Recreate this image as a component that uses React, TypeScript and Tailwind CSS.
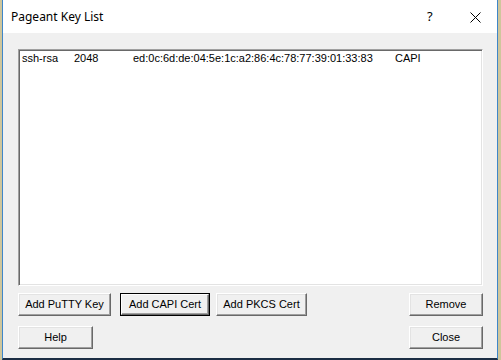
import React from "react";

const btnBase =
  "h-[23px] bg-[#f0f0f0] text-[11px] text-black leading-none flex items-center justify-center border-t border-l border-t-white border-l-white border-b border-r border-b-[#696969] border-r-[#696969] shadow-[inset_-1px_-1px_0_#a0a0a0,inset_1px_1px_0_#e3e3e3]";

function Btn({ label, w, def }: { label: string; w: string; def?: boolean }) {
  if (def) {
    return (
      <div className={`${w} h-[23px] border border-black flex`}>
        <div className="flex-1 bg-[#f0f0f0] text-[11px] text-black leading-none flex items-center justify-center border-t border-l border-t-white border-l-white border-b border-r border-b-[#696969] border-r-[#696969] shadow-[inset_-1px_-1px_0_#a0a0a0]">
          {label}
        </div>
      </div>
    );
  }
  return <div className={`${w} ${btnBase}`}>{label}</div>;
}

export default function App() {
  return (
    <div
      className="w-[501px] h-[360px] bg-[#cfc69c] flex overflow-hidden"
      style={{ fontFamily: '"Liberation Sans", Arial, sans-serif' }}
    >
      <div className="ml-[2px] w-[496px] h-[360px] flex flex-col border-l border-r border-[#3f86c9] border-b-2 border-b-[#1b2d44] bg-[#f0f0f0]">
        {/* title bar */}
        <div className="h-[33px] bg-white flex items-center relative shrink-0">
          <span
            className="ml-[8px] text-[12px] text-black"
            style={{ fontFamily: '"Noto Sans", "Open Sans", sans-serif' }}
          >
            Pageant Key List
          </span>
          <span
            className="absolute left-[424px] top-[7px] text-[13px] text-black"
            style={{ fontFamily: '"Noto Sans", "Open Sans", sans-serif' }}
          >
            ?
          </span>
          <svg
            className="absolute left-[467px] top-[12px]"
            width="11"
            height="11"
            viewBox="0 0 11 11"
          >
            <path d="M0.5 0.5 L10.5 10.5 M10.5 0.5 L0.5 10.5" stroke="#000" strokeWidth="1" />
          </svg>
        </div>
        {/* body */}
        <div className="flex-1 flex flex-col pl-[15px] pr-[14px] pt-[16px]">
          <div className="h-[237px] bg-white border-t border-l border-t-[#a0a0a0] border-l-[#a0a0a0] border-b border-r border-b-white border-r-white shadow-[inset_1px_1px_0_#696969,inset_-1px_-1px_0_#e3e3e3]">
            <div className="flex pl-[3px] pt-[2px] text-[11px] leading-[13px] text-black">
              <span className="w-[52px]">ssh-rsa</span>
              <span className="w-[59px]">2048</span>
              <span className="w-[262px]">ed:0c:6d:de:04:5e:1c:a2:86:4c:78:77:39:01:33:83</span>
              <span>CAPI</span>
            </div>
          </div>
          <div className="flex mt-[7px]">
            <Btn label="Add PuTTY Key" w="w-[93px]" />
            <div className="ml-[9px]">
              <Btn label="Add CAPI Cert" w="w-[90px]" def />
            </div>
            <div className="ml-[6px]">
              <Btn label="Add PKCS Cert" w="w-[91px]" />
            </div>
            <div className="ml-auto">
              <Btn label="Remove" w="w-[74px]" />
            </div>
          </div>
          <div className="flex mt-[10px]">
            <Btn label="Help" w="w-[75px]" />
            <div className="ml-auto">
              <Btn label="Close" w="w-[74px]" />
            </div>
          </div>
        </div>
      </div>
    </div>
  );
}
